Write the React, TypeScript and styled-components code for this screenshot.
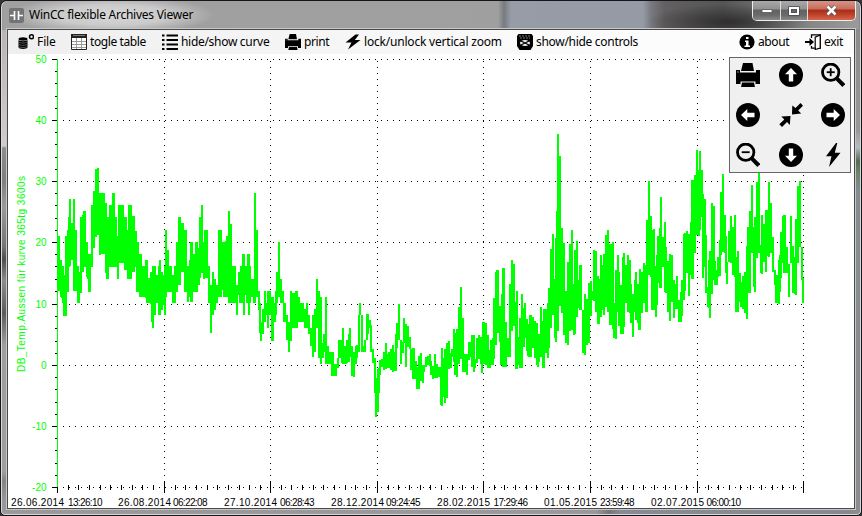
import React from "react";
import styled, { createGlobalStyle } from "styled-components";

const Global = createGlobalStyle`
  html, body { margin: 0; padding: 0; background: #333; overflow: hidden; }
  * { box-sizing: border-box; }
`;

const WindowFrame = styled.div`
  width: 862px;
  height: 516px;
  display: flex;
  flex-direction: column;
  padding: 0 6px 6px 5px;
  border: 1px solid #17141a;
  border-radius: 7px 7px 5px 5px;
  box-shadow: inset 0 0 0 1px #d8d8d8;
  background:
    linear-gradient(180deg, transparent 28px, #b8b4b4 30px, #d0cccc 145px, #8f8c8e 147px, #807e80 180px, #9c999b 205px, #777578 245px, #4f4d50 258px, #8e8b8c 280px, #5c5a5c 312px, #a19e9e 345px, #9f9d9d 470px, #858385 480px, #999 500px) 0 0 / 8px 100% no-repeat,
    linear-gradient(180deg, #8a8a8a 25px, #989898 130px, #b5babf 146px, #566b55 160px, #6d836b 172px, #858b90 190px, #8a8c91 100%) 100% 0 / 8px 100% no-repeat,
    linear-gradient(90deg, #9a989b 595px, #777479 608px, #868a92 618px, #868a90);
  font-family: "Noto Sans", "Open Sans", sans-serif;
  color: #000;
`;

const TitleBar = styled.header`
  height: 28px;
  flex: none;
  display: flex;
  margin: 0 -4px 0 -3px;
  padding-left: 6px;
  border-radius: 5px 5px 0 0;
  background:
    radial-gradient(ellipse 104px 19px at 108px 14px, #d8d8d8 0, #cacaca 55%, rgba(180, 180, 180, 0) 100%),
    radial-gradient(ellipse 80px 18px at 725px 21px, #302e2e 0, rgba(48, 46, 46, 0) 100%),
    linear-gradient(90deg, #a0a0a0 0, #9f9f9f 495px, #777b80 501px, #979ca7 508px, #959aa5 640px, #787a7f 648px, #626060 662px, #555 720px, #777 775px, #999 850px);
`;

const AppIcon = styled.svg`
  margin-top: 7px;
  flex: none;
`;

const Title = styled.h1`
  margin: 6px 0 0 5px;
  flex: 1;
  font-size: 12px;
  line-height: 15px;
  font-weight: 400;
  letter-spacing: -0.25px;
  white-space: nowrap;
`;

const WindowButtons = styled.div`
  display: flex;
  width: 104px;
  height: 20px;
  margin-right: 3px;
  border: 1px solid #eee;
  border-top: 0;
  border-radius: 0 0 5px 5px;
  overflow: hidden;
`;

const WindowButton = styled.button<{ $width: number; $danger?: boolean }>`
  width: ${(p) => p.$width}px;
  height: 19px;
  padding: 0;
  border: 0;
  border-right: 1px solid #ddd;
  display: flex;
  align-items: center;
  justify-content: center;
  background: ${(p) =>
    p.$danger
      ? "linear-gradient(180deg, #d59588 0, #c96d5c 8px, #a62e1a 9px, #c0432a 14px, #d2684e 100%)"
      : "linear-gradient(180deg, #aaa9aa 0, #929192 8px, #646263 9px, #6a6868 14px, #8a8888 100%)"};
  &:last-child { border-right: 0; }
`;

const Client = styled.main`
  flex: 1;
  display: flex;
  flex-direction: column;
  min-height: 0;
  margin-left: 1px;
  border: 1px solid #4a4a4a;
  outline: 1px solid #c7c7c7;
  background: #fff;
`;

const MenuBar = styled.nav`
  height: 24px;
  flex: none;
  display: flex;
  gap: 16px;
  padding: 0 12px 0 10px;
  background: linear-gradient(90deg, #efefef, #fcfcfc 75%);
`;

const MenuItem = styled.button<{ $last?: boolean }>`
  display: flex;
  align-items: center;
  gap: 3px;
  padding: 0;
  border: 0;
  background: none;
  color: #000;
  font: inherit;
  margin-left: ${(p) => (p.$last ? "auto" : "0")};
`;

const MenuText = styled.span<{ $width: number; $track: number }>`
  width: ${(p) => p.$width}px;
  font-size: 12px;
  line-height: 16px;
  letter-spacing: ${(p) => p.$track}px;
  white-space: nowrap;
  text-align: left;
`;

const ChartArea = styled.section`
  position: relative;
  flex: 1;
`;

const ChartSvg = styled.svg`
  display: block;
  font-family: "Liberation Sans", Arial, sans-serif;
  font-size: 10px;
`;

const ControlPanel = styled.div`
  position: absolute;
  left: 721px;
  top: 3px;
  width: 122px;
  height: 116px;
  display: grid;
  grid-template-columns: 36px 49px 36px;
  grid-template-rows: 34px 45px 35px;
  justify-items: center;
  align-items: center;
  border: 1px solid #666;
  background: #f0f0f0;
`;

const PanelButton = styled.button`
  display: flex;
  padding: 0;
  border: 0;
  background: none;
  color: #000;
`;

type IconName =
  | "file" | "table" | "list" | "print" | "flash" | "controls" | "about" | "exit"
  | "up" | "down" | "left" | "right" | "zoomIn" | "zoomOut" | "shrink" | "bolt";

const arrow = (angle: number) => (
  <>
    <circle cx="12" cy="12" r="12" />
    <path d="M12 5 18 11.3H14.2V18.5H9.8V11.3H6Z" fill="#fff" transform={`rotate(${angle} 12 12)`} />
  </>
);

const lens = (
  <>
    <circle cx="9.7" cy="9.2" r="8.2" fill="none" stroke="#000" strokeWidth="2.8" />
    <path d="m15.5 15.2 7.3 7.3" stroke="#000" strokeWidth="4" />
    <path d="M5.7 9.2h8" stroke="#000" strokeWidth="1.8" />
  </>
);

const glyphs: Record<IconName, { box: number; art: React.ReactNode }> = {
  file: {
    box: 16,
    art: (
      <>
        <ellipse cx="5" cy="5" rx="4.5" ry="1.7" />
        <path d="M.5 5.5v7.7c0 2.3 9 2.3 9 0V5.5c0 2.2-9 2.2-9 0Z" />
        <path d="M.5 7.7c1 1.8 7.5 1.8 9 0M.5 10c1 1.8 7.5 1.8 9 0M.5 12.2c1 1.8 7.5 1.8 9 0" fill="none" stroke="#777" strokeWidth=".7" />
        <circle cx="13.5" cy="2.8" r="2" fill="none" stroke="#000" strokeWidth="1.5" />
      </>
    ),
  },
  table: {
    box: 16,
    art: (
      <>
        <path d="M.5.5h15v15H.5z" fill="#fff" stroke="#222" />
        <path d="M0 0h16v4H0z" fill="#222" />
        <path d="M1 7.5h14M1 10.5h14M1 13.5h14M5.5 4v11M10.5 4v11" stroke="#999" fill="none" />
        <path d="M2 1.5h12" stroke="#777" />
      </>
    ),
  },
  list: {
    box: 16,
    art: <path d="M0 1.5h2.5m2 0H16M0 6h2.5m2 0H16M0 10.5h2.5m2 0H16M0 15h2.5m2 0H16" fill="none" stroke="#000" strokeWidth="1.9" />,
  },
  print: {
    box: 24,
    art: (
      <>
        <path d="M7 0h9.5l1.5 8H5Z" />
        <path d="M0 7h4v2.5h16V7h4v14h-4.5v-2.5h-15V21H0Z" />
        <path d="M6 19.5h12l1 4.5H5Z" />
        <path d="M1 9h2" stroke="#888" />
      </>
    ),
  },
  flash: { box: 16, art: <path d="m10.5.5-10 8h6L3 15.5 15.5 6H9.8L14 .5Z" /> },
  controls: {
    box: 16,
    art: (
      <>
        <path d="M1.5 0h13L16 2v10l-2.5 4h-11L0 12V2Z" />
        <path d="M2 2h12M3 4h10" stroke="#777" strokeDasharray="2 1" />
        <ellipse cx="8" cy="9" rx="5" ry="3" fill="#eee" />
        <path d="m4 7 8 4m0-4-8 4M6.5 9h3" stroke="#000" strokeWidth="1.3" />
      </>
    ),
  },
  about: {
    box: 16,
    art: (
      <>
        <circle cx="8" cy="8" r="7.6" />
        <path d="M7 3h2.5v2H7zM6 6.5h3.5v5H11V13H5.5v-1.5H7V8H6z" fill="#fff" />
      </>
    ),
  },
  exit: {
    box: 16,
    art: (
      <>
        <path d="M6.5 4V.8h9v13.4H11" fill="none" stroke="#000" strokeWidth="1.3" />
        <path d="m15.2 1-5 2.2V15.5l5-1.5Z" fill="#fff" stroke="#000" strokeWidth="1.2" />
        <path d="M0 7h4.5V4L9 8l-4.5 4V9H0Z" />
        <path d="M6.5 12v2.2h4" fill="none" stroke="#000" strokeWidth="1.3" />
      </>
    ),
  },
  up: { box: 24, art: arrow(0) },
  right: { box: 24, art: arrow(90) },
  down: { box: 24, art: arrow(180) },
  left: { box: 24, art: arrow(270) },
  zoomIn: { box: 24, art: <>{lens}<path d="M9.7 5.2v8" stroke="#000" strokeWidth="1.8" /></> },
  zoomOut: { box: 24, art: lens },
  shrink: {
    box: 24,
    art: (
      <>
        <path d="m13 11.5.3-9 3.2 2.5L21.5 0 24 2.7 19.2 7.6l3 2.8Z" />
        <path d="M11.5 13 2.3 13.6l3 2.8L.3 21.2 3 24l5-5 2.8 3.1Z" />
      </>
    ),
  },
  bolt: { box: 24, art: <path d="M15 0 5 13.2h5.5L8 24 19.5 9.7h-5.7L16.3 0Z" /> },
};

function Icon({ name, size }: { name: IconName; size: number }) {
  const { box, art } = glyphs[name];
  return (
    <svg width={size} height={size} viewBox={`0 0 ${box} ${box}`}>
      {art}
    </svg>
  );
}

const menu: { icon: IconName; text: string; width: number; track: number; last?: boolean }[] = [
  { icon: "file", text: "File", width: 18, track: -0.1 },
  { icon: "table", text: "togle table", width: 56, track: -0.4 },
  { icon: "list", text: "hide/show curve", width: 88, track: -0.3 },
  { icon: "print", text: "print", width: 25, track: -0.4 },
  { icon: "flash", text: "lock/unlock vertical zoom", width: 137, track: -0.2 },
  { icon: "controls", text: "show/hide controls", width: 102, track: -0.3 },
  { icon: "about", text: "about", width: 31, track: -0.4, last: true },
  { icon: "exit", text: "exit", width: 18, track: -0.3 },
];

const panel: IconName[] = ["print", "up", "zoomIn", "left", "shrink", "right", "zoomOut", "down", "bolt"];

// Each section lists "x:high-low" columns in thirds of a pixel, relative to its origin.
const sections = [
  {
    x: 0, y: 160, end: 690,
    data: "172:228-393 180:300-410 184:345-415 187:318-430 190:345-467 194:228-467 200:210-395 204:171-320 208:117-318 213:190-300 219:117-345 220:117-392 225:210-392 230:318-375 232:335-430 240:170-400 245:165-335 248:153-320 257:245-350 262:283-358 265:283-395 273:135-320 279:92-265 285:27-230 291:24-225 297:98-285 303:98-283 315:130-340 318:170-358 328:135-320 335:98-320 345:170-320 351:228-357 354:135-310 372:170-330 381:210-358 384:135-358 395:168-335 404:212-322 408:245-395 417:282-412 426:318-412 435:300-415 438:300-430 444:355-430 450:335-432 453:410-485 457:318-503 462:318-465 466:345-430 474:318-465 478:300-465 484:335-450 487:345-435 492:318-465 495:210-410 502:270-395 508:318-395 516:345-430 522:318-430 528:245-395 534:170-375 543:190-335 552:210-395 560:318-427 566:300-410 570:247-427 579:282-395 585:245-395 595:263-375 598:170-355 603:135-340 609:247-358 613:210-355 624:318-430 630:375-520 636:335-465 641:358-450 648:375-430 654:210-410 665:283-390 670:245-410 679:228-410 684:153-430",
  },
  {
    x: 220, y: 180, end: 600,
    data: "0:150-350 5:185-315 9:225-333 14:183-335 18:168-350 24:94-335 30:132-370 36:258-370 47:315-405 53:275-345 58:275-370 61:258-370 66:222-370 69:222-405 72:258-345 78:258-370 81:222-370 84:222-405 88:258-370 93:297-350 98:297-370 102:39-370 108:150-352 114:333-390 118:370-460 121:425-482 126:387-463 132:333-425 137:370-405 141:333-443 147:333-405 152:350-482 162:370-425 164:333-405 168:276-370 174:186-352 180:297-370 186:333-370 190:370-425 198:405-480 205:425-515 210:333-482 217:338-445 225:333-445 234:352-425 240:370-425 252:388-443 258:370-443 264:405-462 271:443-498 277:405-532 282:388-515 288:297-445 294:333-533 299:352-553 305:490-533 310:463-515 314:352-490 316:352-553 321:498-553 327:515-553 334:515-588 342:553-588 350:533-563 354:480-533 362:480-550 366:443-553 371:498-553 376:515-553 378:480-550 384:463-545 388:443-530 393:498-588 398:515-590 406:498-553 409:495-533 414:405-515 418:370-405 423:405-515 428:498-516 433:480-515 437:425-480 439:403-463 447:420-445 450:435-515 456:508-550 461:535-585 463:580-640 466:595-712 472:568-695 475:565-640 478:540-585 483:538-560 489:515-570 494:490-568 500:522-565 505:515-565 510:508-570 515:495-577 519:515-572 525:462-573 529:430-505 533:373-480 539:480-553 545:485-520 550:413-490 555:433-560 561:438-500 567:470-508 571:508-570 576:503-597 584:543-598 589:560-628 593:528-628 599:562-570",
  },
  {
    x: 420, y: 120, end: 540,
    data: "0:699-783 5:735-790 10:735-755 15:710-740 21:708-735 27:702-738 31:722-765 36:737-778 42:702-775 48:732-775 52:740-770 60:740-855 63:684-857 69:715-830 72:687-848 78:669-833 84:663-748 90:700-745 94:687-712 99:627-725 103:640-765 108:628-770 114:560-733 120:501-718 126:594-755 132:702-755 138:702-765 144:665-720 150:665-710 153:645-740 159:645-757 163:718-745 168:654-728 174:645-718 180:652-732 183:715-758 187:606-733 195:608-735 201:645-745 207:690-743 211:660-735 216:654-735 220:535-718 225:455-675 229:450-640 236:557-665 240:557-735 244:522-735 247:444-740 255:605-742 260:655-710 264:663-710 267:492-712 273:420-633 279:432-618 285:545-748 289:513-748 294:650-735 298:594-743 303:521-745 309:565-680 313:548-653 318:597-693 321:612-708 325:630-710 328:585-710 336:592-685 342:602-715 347:608-735 350:690-740 354:642-725 360:561-710 366:603-745 370:567-745 375:567-700 381:548-715 385:503-683 390:387-625 396:342-585 402:477-655 405:354-667 408:273-625 411:42-633 417:108-557 423:323-578 429:368-645 435:513-670 441:425-675 447:372-633 453:330-630 458:492-645 462:390-643 468:363-590 474:480-565 478:435-570 486:570-698 492:522-705 498:537-675 502:590-668 504:490-668 510:483-587 516:513-540 519:390-543 526:393-575 531:468-612 535:477-613",
  },
  {
    x: 600, y: 140, end: 611,
    data: "0:345-530 5:375-510 9:342-525 15:285-500 21:270-515 27:312-555 36:305-567 40:488-595 46:390-597 51:345-515 55:395-557 60:435-583 66:350-583 70:340-560 75:375-490 81:345-515 87:360-518 90:432-550 96:462-590 101:420-515 104:395-540 110:432-550 114:455-570 117:387-570 123:395-520 129:368-490 135:375-515 139:240-515 144:123-405 150:228-410 154:270-510 160:268-510 164:378-530 168:345-495 172:288-430 176:263-443 180:171-445 186:290-380 191:246-455 196:320-458 201:362-515 206:342-543 213:345-485 219:420-535 223:432-507 228:408-507 234:480-545 239:455-545 243:420-527 249:282-480 253:280-452 257:272-400 264:282-467 270:245-405 274:120-417 282:105-340 288:30-285 294:90-288 297:33-270 303:90-230 306:162-415 312:177-380 315:285-458 321:440-500 325:360-505 328:333-535 332:188-463 339:198-420 343:362-435 347:390-435 351:350-410 356:300-408 361:156-345 366:102-335 372:225-340 375:288-400 378:365-432 384:273-365 390:228-370 396:262-405 402:225-410 405:350-515 411:333-515 416:400-485 421:425-500 427:408-507 433:395-520 437:318-537 441:262-460 447:213-460 453:135-340 458:262-440 461:230-457 467:230-355 469:125-353 474:98-340 480:315-400 483:225-402 489:252-365 494:210-395 499:210-348 504:126-350 510:188-340 516:290-395 522:390-435 526:405-490 533:360-492 537:345-455 541:276-415 546:228-370 550:225-400 559:320-400 564:372-470 570:228-370 575:318-458 581:350-462 585:237-465 591:138-370 597:123-320 602:320-420 606:415-490",
  },
];

const curve = sections
  .map((s) => {
    const columns = s.data.split(" ").map((c) => c.split(/[:-]/).map(Number));
    return columns
      .map(([x, hi, lo], i) => {
        const next = i + 1 < columns.length ? columns[i + 1][0] : s.end;
        const left = Math.round(s.x + x / 3);
        const right = Math.max(left + 2, Math.round(s.x + next / 3));
        const top = Math.round(s.y + hi / 3);
        const bottom = Math.round(s.y + lo / 3);
        return `M${left} ${top}H${right}V${bottom}H${left}Z`;
      })
      .join("");
  })
  .join("");

const rows = [59, 120, 181, 242, 304, 365, 426, 487];
const cols = [57, 164, 270, 377, 483, 590, 697, 803];
const stamps = [
  { date: "26.06.2014", time: "13:26:10", x: 11, t: 68 },
  { date: "26.08.2014", time: "06:22:08", x: 118, t: 173 },
  { date: "27.10.2014", time: "06:28:43", x: 224, t: 280 },
  { date: "28.12.2014", time: "09:24:45", x: 331, t: 386 },
  { date: "28.02.2015", time: "17:29:46", x: 437, t: 493.5 },
  { date: "01.05.2015", time: "23:59:48", x: 544, t: 600 },
  { date: "02.07.2015", time: "06:00:10", x: 651, t: 706.5 },
];

function Chart() {
  return (
    <ChartSvg width="846" height="454" viewBox="8 54 846 454">
      <g stroke="#000" strokeDasharray="1 5" shapeRendering="crispEdges">
        {rows.map((y) => <path key={y} d={`M63 ${y + 0.5}H804`} />)}
        {cols.slice(1).map((x) => <path key={x} d={`M${x + 0.5} 61V487`} />)}
      </g>
      <g stroke="#000" shapeRendering="crispEdges">
        {rows.map((y, i) => (
          <React.Fragment key={y}>
            <path d={`M52 ${y + 0.5}h6`} />
            {i < 7 && [12, 24, 37, 49].map((d) => <path key={d} d={`M55 ${y + d + 0.5}h3`} />)}
          </React.Fragment>
        ))}
        {cols.map((x, i) => (
          <React.Fragment key={x}>
            <path d={`M${x + 0.5} 481v12`} />
            {i < 7 && [11, 21, 32, 43, 53, 64, 75, 85, 96].map((d) => (
              <path key={d} d={`M${x + d + 0.5} 485v5`} />
            ))}
          </React.Fragment>
        ))}
      </g>
      <path d="M57 59h1v428h-1Z" fill="#0f0" shapeRendering="crispEdges" />
      <path d={curve} fill="#0f0" shapeRendering="crispEdges" />
      <g fill="#0f0" textAnchor="end">
        {rows.map((y, i) => <text key={y} x="46.5" y={y + 4}>{50 - i * 10}</text>)}
      </g>
      <text transform="translate(24.5 372) rotate(-90)" fill="#0f0" textLength="196">
        DB_Temp.Aussen für kurve 365tg 3600s
      </text>
      {stamps.map((s) => (
        <React.Fragment key={s.date}>
          <text x={s.x} y="506" textLength="53">{s.date}</text>
          <text x={s.t} y="506" textLength="34.5">{s.time}</text>
        </React.Fragment>
      ))}
    </ChartSvg>
  );
}

export default function App() {
  return (
    <>
      <Global />
      <WindowFrame>
        <TitleBar>
          <AppIcon width="15" height="15" viewBox="0 0 15 15">
            <rect width="15" height="15" rx="2" fill="#747474" />
            <path d="M1 7.5h4M10 7.5h4M5.5 3v9M9.5 3v9" stroke="#fff" strokeWidth="1.6" />
          </AppIcon>
          <Title>WinCC flexible Archives Viewer</Title>
          <WindowButtons>
            <WindowButton $width={28} aria-label="Minimize">
              <svg width="12" height="6"><path d="M1 1.5h10v3H1z" fill="#fff" stroke="#555" strokeWidth=".8" /></svg>
            </WindowButton>
            <WindowButton $width={27} aria-label="Maximize">
              <svg width="12" height="10"><path d="M2 2h8v6H2z" fill="none" stroke="#4b4b55" strokeWidth="3.6" /><path d="M2 2h8v6H2z" fill="none" stroke="#fff" strokeWidth="2" /></svg>
            </WindowButton>
            <WindowButton $width={47} $danger aria-label="Close">
              <svg width="13" height="11"><path d="m2.5 1.5 8 8m0-8-8 8" stroke="#555365" strokeWidth="4" /><path d="m2.5 1.5 8 8m0-8-8 8" stroke="#fff" strokeWidth="2.5" /></svg>
            </WindowButton>
          </WindowButtons>
        </TitleBar>
        <Client>
          <MenuBar>
            {menu.map((m) => (
              <MenuItem key={m.text} $last={m.last}>
                <Icon name={m.icon} size={16} />
                <MenuText $width={m.width} $track={m.track}>{m.text}</MenuText>
              </MenuItem>
            ))}
          </MenuBar>
          <ChartArea>
            <Chart />
            <ControlPanel>
              {panel.map((name) => (
                <PanelButton key={name} aria-label={name}>
                  <Icon name={name} size={24} />
                </PanelButton>
              ))}
            </ControlPanel>
          </ChartArea>
        </Client>
      </WindowFrame>
    </>
  );
}
